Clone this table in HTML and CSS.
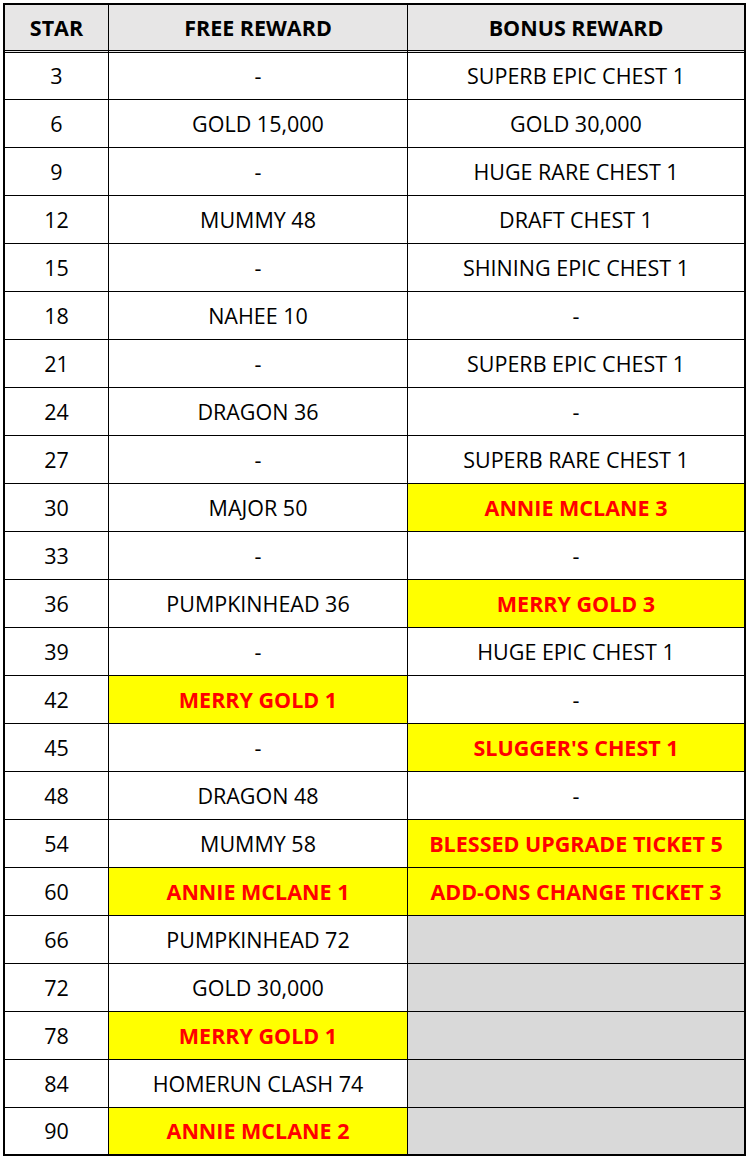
FILE: index.html
```html
<!DOCTYPE html>
<html>
<head>
<meta charset="utf-8">
<link rel="stylesheet" href="styles.css">
</head>
<body>
<div class="frame">
<table class="rewards">
<colgroup><col class="c-star"><col class="c-free"><col class="c-bonus"></colgroup>
<thead>
<tr><th>STAR</th><th>FREE REWARD</th><th>BONUS REWARD</th></tr>
</thead>
<tbody>
<tr class="first"><td>3</td><td>-</td><td>SUPERB EPIC CHEST 1</td></tr>
<tr><td>6</td><td>GOLD 15,000</td><td>GOLD 30,000</td></tr>
<tr><td>9</td><td>-</td><td>HUGE RARE CHEST 1</td></tr>
<tr><td>12</td><td>MUMMY 48</td><td>DRAFT CHEST 1</td></tr>
<tr><td>15</td><td>-</td><td>SHINING EPIC CHEST 1</td></tr>
<tr><td>18</td><td>NAHEE 10</td><td>-</td></tr>
<tr><td>21</td><td>-</td><td>SUPERB EPIC CHEST 1</td></tr>
<tr><td>24</td><td>DRAGON 36</td><td>-</td></tr>
<tr><td>27</td><td>-</td><td>SUPERB RARE CHEST 1</td></tr>
<tr><td>30</td><td>MAJOR 50</td><td class="hl">ANNIE MCLANE 3</td></tr>
<tr><td>33</td><td>-</td><td>-</td></tr>
<tr><td>36</td><td>PUMPKINHEAD 36</td><td class="hl">MERRY GOLD 3</td></tr>
<tr><td>39</td><td>-</td><td>HUGE EPIC CHEST 1</td></tr>
<tr><td>42</td><td class="hl">MERRY GOLD 1</td><td>-</td></tr>
<tr><td>45</td><td>-</td><td class="hl">SLUGGER'S CHEST 1</td></tr>
<tr><td>48</td><td>DRAGON 48</td><td>-</td></tr>
<tr><td>54</td><td>MUMMY 58</td><td class="hl">BLESSED UPGRADE TICKET 5</td></tr>
<tr><td>60</td><td class="hl">ANNIE MCLANE 1</td><td class="hl">ADD-ONS CHANGE TICKET 3</td></tr>
<tr><td>66</td><td>PUMPKINHEAD 72</td><td class="na"></td></tr>
<tr><td>72</td><td>GOLD 30,000</td><td class="na"></td></tr>
<tr><td>78</td><td class="hl">MERRY GOLD 1</td><td class="na"></td></tr>
<tr><td>84</td><td>HOMERUN CLASH 74</td><td class="na"></td></tr>
<tr class="last"><td>90</td><td class="hl">ANNIE MCLANE 2</td><td class="na"></td></tr>
</tbody>
</table>
</div>
</body>
</html>
```
FILE: styles.css
```css
html, body {
  margin: 0;
  padding: 0;
  background: #fff;
}
body {
  padding: 3px;
  font-family: "Open Sans", "Noto Sans", "Noto Sans CJK KR", sans-serif;
  color: #000;
}
.frame {
  width: 739px;
  border: 2px solid #000;
}
.rewards {
  width: 739px;
  border-collapse: separate;
  border-spacing: 0;
  table-layout: fixed;
}
.c-star { width: 104px; }
.c-free { width: 299px; }
.c-bonus { width: 336px; }
.rewards th,
.rewards td {
  padding: 0;
  text-align: center;
  vertical-align: middle;
  border-right: 1px solid #000;
  border-bottom: 1px solid #000;
  font-size: 21.5px;
  line-height: 1.2;
  white-space: nowrap;
}
.rewards th:last-child,
.rewards td:last-child {
  border-right: 0;
}
.rewards th {
  background: #e7e6e6;
  font-weight: 700;
  border-bottom: 3px double #000;
  height: 48px;
  box-sizing: border-box;
}
.rewards td {
  height: 48px;
  box-sizing: border-box;
  font-weight: 400;
}
.rewards tr.first td { height: 47px; }
.rewards tr.last td { height: 46px; border-bottom: 0; }
.rewards td.hl {
  background: #ffff00;
  color: #ff0000;
  font-weight: 700;
}
.rewards td.na {
  background: #d9d9d9;
}
```
